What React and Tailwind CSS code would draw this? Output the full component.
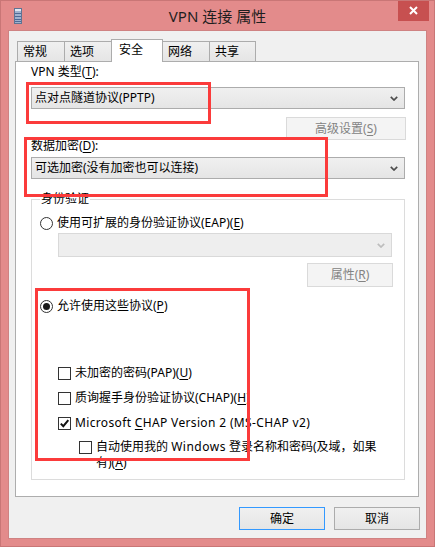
import React from "react";

const U = ({ children }) => (
  <span className="underline underline-offset-[2px] decoration-[1px]">{children}</span>
);

function Chevron({ color = "#4d4d4d" }) {
  return (
    <svg width="8" height="5" viewBox="0 0 8 5">
      <path d="M0.8 0.8 L4 4 L7.2 0.8" fill="none" stroke={color} strokeWidth="1.7" />
    </svg>
  );
}

function Radio({ checked }) {
  return (
    <span className="w-[13px] h-[13px] rounded-full border border-[#333333] bg-white flex items-center justify-center shrink-0">
      {checked && <span className="w-[7px] h-[7px] rounded-full bg-[#1a1a1a]" />}
    </span>
  );
}

function Check({ checked }) {
  return (
    <span className="w-[13px] h-[13px] border border-[#333333] bg-white flex items-center justify-center shrink-0">
      {checked && (
        <svg width="11" height="11" viewBox="0 0 11 11">
          <path d="M1.8 5.6 L4.3 8.2 L9.3 2.2" fill="none" stroke="#111" strokeWidth="2" />
        </svg>
      )}
    </span>
  );
}

function ServerIcon() {
  return (
    <svg width="8" height="16" viewBox="0 0 8 16">
      <rect x="0.5" y="0.5" width="7" height="15" fill="#9fb2cf" stroke="#5f7493" />
      <rect x="1" y="1" width="6" height="2" fill="#dfe7f2" />
      <line x1="1" y1="5.5" x2="7" y2="5.5" stroke="#4e6a96" />
      <line x1="1" y1="8.5" x2="7" y2="8.5" stroke="#4e6a96" />
      <line x1="1" y1="11.5" x2="7" y2="11.5" stroke="#4e6a96" />
      <line x1="1" y1="13.5" x2="7" y2="13.5" stroke="#4e6a96" />
    </svg>
  );
}

function Tab({ label, selected, w }) {
  if (selected) {
    return (
      <div
        className={`${w} h-[23px] -mb-px -ml-px relative z-10 bg-white border border-b-0 border-[#acacac] pl-[7px] pt-[2px] leading-[16px]`}
      >
        {label}
      </div>
    );
  }
  return (
    <div
      className={`${w} h-[20px] -ml-px first:ml-0 bg-linear-to-b from-[#f0f0f0] to-[#e5e5e5] border border-b-0 border-[#acacac] pl-[5px] pt-[2px] leading-[16px]`}
    >
      {label}
    </div>
  );
}

export default function App() {
  return (
    <div className="relative w-[435px] h-[547px] overflow-hidden bg-[#e38b8b] border border-[#c97676] flex flex-col font-['Noto_Sans','Noto_Sans_CJK_SC',sans-serif] text-[12px] text-black">
      {/* Title bar */}
      <div className="h-[29px] grid grid-cols-[1fr_auto_1fr] items-center shrink-0">
        <div className="ml-[13px] flex items-center">
          <ServerIcon />
        </div>
        <div className="text-[15px] leading-[20px] text-[#1e1e1e]">VPN 连接 属性</div>
        <div className="justify-self-end self-start mr-[5px] -mt-px w-[31px] h-[21px] bg-[#c75050] flex items-center justify-center">
          <svg width="9" height="9" viewBox="0 0 9 9">
            <path d="M1 1 L8 8 M8 1 L1 8" stroke="#ffffff" strokeWidth="2" />
          </svg>
        </div>
      </div>

      {/* Client area */}
      <div className="flex-1 mx-[7px] mb-[7px] border border-[#cf8282] bg-[#f0f0f0] flex flex-col pt-[8px] pl-[6px] pr-[7px]">
        {/* Tabs */}
        <div className="h-[22px] flex items-end pl-[2px]">
          <Tab label="常规" w="w-[48px]" />
          <Tab label="选项" w="w-[48px]" />
          <Tab label="安全" w="w-[52px]" selected />
          <Tab label="网络" w="w-[48px]" />
          <Tab label="共享" w="w-[47px]" />
        </div>

        {/* Panel */}
        <div className="h-[436px] border border-[#adadad] bg-white flex flex-col pl-[15px] pr-[13px] pt-[2px]">
          <div className="h-[16px] leading-[16px]">
            VPN 类型(<U>T</U>):
          </div>
          <div className="mt-[7px] h-[22px] w-[374px] border border-[#acacac] bg-linear-to-b from-[#f0f0f0] to-[#e5e5e5] flex items-center justify-between pl-[3px] pr-[6px] leading-[16px]">
            <span>点对点隧道协议(PPTP)</span>
            <Chevron />
          </div>
          <div className="mt-[8px] self-end -mr-px h-[23px] w-[120px] border border-[#dadada] bg-[#f4f4f4] text-[#838383] flex items-center justify-center leading-[16px]">
            高级设置(<U>S</U>)
          </div>
          <div className="-mt-[2px] h-[16px] leading-[16px]">
            数据加密(<U>D</U>):
          </div>
          <div className="mt-[3px] h-[22px] w-[374px] border border-[#acacac] bg-linear-to-b from-[#f0f0f0] to-[#e5e5e5] flex items-center justify-between pl-[3px] pr-[6px] leading-[16px]">
            <span>可选加密(没有加密也可以连接)</span>
            <Chevron />
          </div>

          {/* Group box */}
          <div className="relative mt-[20px] h-[281px] w-[374px] border border-[#dcdcdc] flex flex-col pl-[8px]">
            <span className="absolute left-[8px] -top-[9px] px-[1px] bg-white leading-[16px]">身份验证</span>

            <div className="mt-[15px] h-[16px] flex items-center gap-[4px] leading-[16px]">
              <Radio />
              <span>
                使用可扩展的身份验证协议(EAP)(<U>E</U>)
              </span>
            </div>
            <div className="mt-[2px] ml-[18px] h-[24px] w-[334px] border border-[#d9d9d9] bg-[#eeeeee] flex items-center justify-end pr-[6px]">
              <Chevron color="#bdbdbd" />
            </div>
            <div className="mt-[6px] self-end mr-[11px] h-[24px] w-[86px] border border-[#dadada] bg-[#f4f4f4] text-[#838383] flex items-center justify-center leading-[16px]">
              属性(<U>R</U>)
            </div>

            <div className="mt-[11px] h-[16px] flex items-center gap-[4px] leading-[16px]">
              <Radio checked />
              <span>
                允许使用这些协议(<U>P</U>)
              </span>
            </div>

            <div className="mt-[51px] ml-[18px] h-[16px] flex items-center gap-[4px] leading-[16px]">
              <Check />
              <span>
                未加密的密码(PAP)(<U>U</U>)
              </span>
            </div>
            <div className="mt-[9px] ml-[18px] h-[16px] flex items-center gap-[4px] leading-[16px]">
              <Check />
              <span>
                质询握手身份验证协议(CHAP)(<U>H</U>)
              </span>
            </div>
            <div className="mt-[9px] ml-[18px] h-[16px] flex items-center gap-[4px] leading-[16px]">
              <Check checked />
              <span className="tracking-[0.35px]">
                Microsoft <U>C</U>HAP Version 2 (MS-CHAP v2)
              </span>
            </div>
            <div className="mt-[8px] ml-[39px] flex items-start gap-[4px] leading-[16px]">
              <span className="mt-[2px]">
                <Check />
              </span>
              <span>
                自动使用我的 <span className="tracking-[0.5px]">Windows</span> 登录名称和密码(及域，如果
                <br />
                有)(<U>A</U>)
              </span>
            </div>
          </div>
        </div>

        {/* Bottom buttons */}
        <div className="mt-[10px] flex justify-end gap-[9px] -mr-px">
          <div className="h-[23px] w-[86px] border border-[#3399ff] bg-linear-to-b from-[#f0f0f0] to-[#e5e5e5] flex items-center justify-center leading-[16px]">
            确定
          </div>
          <div className="h-[23px] w-[86px] border border-[#acacac] bg-linear-to-b from-[#f0f0f0] to-[#e5e5e5] flex items-center justify-center leading-[16px]">
            取消
          </div>
        </div>
      </div>

      {/* Red annotation rectangles */}
      <div className="absolute left-[25px] top-[81px] w-[185px] h-[42px] border-[3px] border-[#fb3b3b] pointer-events-none" />
      <div className="absolute left-[23px] top-[136px] w-[304px] h-[60px] border-[3px] border-[#fb3b3b] pointer-events-none" />
      <div className="absolute left-[34px] top-[287px] w-[215px] h-[173px] border-[3px] border-[#fb3b3b] pointer-events-none" />
    </div>
  );
}
